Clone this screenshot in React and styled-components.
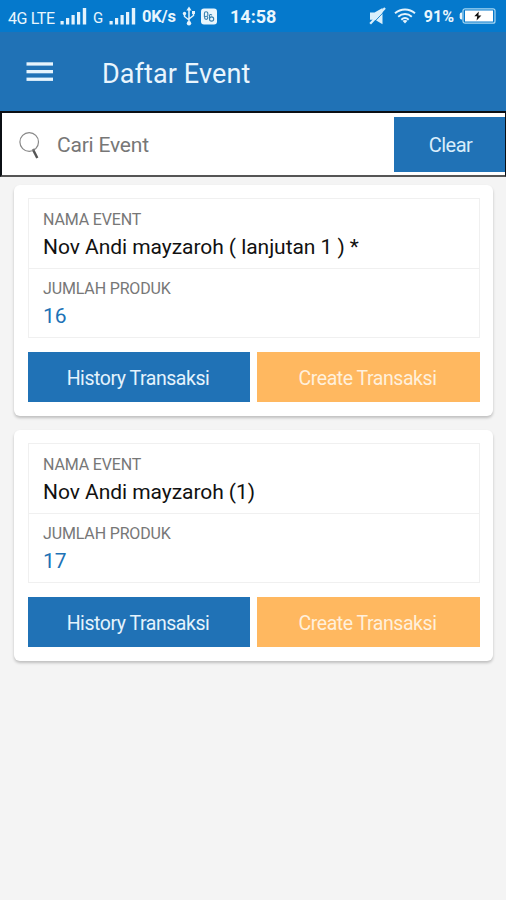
import React, { useState } from 'react';
import styled, { createGlobalStyle } from 'styled-components';

const EVENTS = [
  { id: 1, name: 'Nov Andi mayzaroh ( lanjutan 1 ) *', total: 16 },
  { id: 2, name: 'Nov Andi mayzaroh (1)', total: 17 },
];

const SignalIcon = () => (
  <svg width="28" height="18" viewBox="0 0 28 18" fill="#e4f3fc">
    <rect x="0.5" y="14" width="3.2" height="3.5" />
    <rect x="6" y="11" width="3.2" height="6.5" />
    <rect x="11.5" y="8" width="3.2" height="9.5" />
    <rect x="17" y="5" width="3.2" height="12.5" />
    <rect x="22.8" y="1" width="3.4" height="16.5" />
  </svg>
);

const UsbIcon = () => (
  <svg width="14" height="20" viewBox="0 0 14 20" fill="none" stroke="#e4f3fc" strokeWidth="1.5">
    <path d="M7 3v14M2.5 8v2.5L7 14M11.5 7v2.5L7 13" />
    <path d="M7 0.5l2.6 4H4.4z" fill="#e4f3fc" stroke="none" />
    <circle cx="7" cy="17.3" r="2.2" fill="#e4f3fc" stroke="none" />
    <circle cx="2.5" cy="7.5" r="1.7" fill="#e4f3fc" stroke="none" />
    <rect x="10" y="5" width="3" height="3" fill="#e4f3fc" stroke="none" />
  </svg>
);

const AppBadgeIcon = () => (
  <svg width="16" height="17" viewBox="0 0 16 17">
    <rect width="16" height="16" y="0.5" rx="3" fill="#e9f6fd" />
    <g fill="none" stroke="#347fae" strokeWidth="1.1">
      <path d="M3.4 9V5.6c0-2.4 3.4-2.4 3.4 0V8" />
      <circle cx="5.2" cy="9.8" r="1.6" />
      <circle cx="10.6" cy="11" r="2.1" />
      <path d="M8.5 10.5V7.8c0-1.5 1.6-1.7 2.4-0.6" />
    </g>
  </svg>
);

const MutedIcon = () => (
  <svg width="17" height="18" viewBox="0 0 17 18">
    <path d="M1 5.5h4.5L13.5 1v16.3L6 12.8H1z" fill="#d9effb" />
    <path d="M2.6 17.8L17 2.6" stroke="#0579cc" strokeWidth="0.9" />
    <path d="M1.2 16.8L16 1" stroke="#d9effb" strokeWidth="2.2" />
  </svg>
);

const WifiIcon = () => (
  <svg width="22" height="16" viewBox="0 0 22 16" fill="none" stroke="#e4f3fc" strokeWidth="1.9">
    <path d="M1 5.3c5.8-5.1 14.2-5.1 20 0M4.2 8.7c4-3.6 9.6-3.6 13.6 0M7.3 11.8c2.2-2 5.2-2 7.4 0" />
    <path d="M8.5 12.8L11 15.5l2.5-2.7c-1.4-1.2-3.6-1.2-5 0z" fill="#e4f3fc" stroke="none" />
  </svg>
);

const BatteryIcon = () => (
  <svg width="37" height="16" viewBox="0 0 37 16">
    <path d="M3.2 4.5H2.5Q0.7 4.5 0.7 6.5v3q0 2 1.8 2h0.7z" fill="#e4f3fc" />
    <rect x="4" y="0.8" width="32" height="14.4" rx="2" fill="none" stroke="#a8d8f2" strokeWidth="1.2" />
    <rect x="6" y="2.5" width="28" height="11" fill="#fff" />
    <path d="M19.8 3.5l-4.5 4.7h2.9l-0.6 4.3 4.8-5h-3z" fill="#111" />
  </svg>
);

const MenuIcon = () => (
  <svg width="28" height="20" viewBox="0 0 28 20" fill="#e6f4fd">
    <rect x="0.5" y="0.3" width="26.5" height="3.3" />
    <rect x="0.5" y="8" width="26.5" height="3.3" />
    <rect x="0.5" y="15.6" width="26.5" height="3.3" />
  </svg>
);

const SearchIcon = () => (
  <svg width="22" height="28" viewBox="0 0 22 28" fill="none">
    <circle cx="10.2" cy="10" r="9.3" stroke="#888" strokeWidth="1.2" />
    <path d="M13 18.2l2.6-1.3" stroke="#777" strokeWidth="1.2" />
    <path d="M14.4 18.4l3.9 7.6" stroke="#555" strokeWidth="2.4" />
  </svg>
);

const EventCard = ({ name, total }) => (
  <Card>
    <Detail>
      <Field>
        <Label>NAMA EVENT</Label>
        <Value>{name}</Value>
      </Field>
      <Field>
        <Label>JUMLAH PRODUK</Label>
        <Value $count>{total}</Value>
      </Field>
    </Detail>
    <Actions>
      <ActionButton>History Transaksi</ActionButton>
      <ActionButton $create>Create Transaksi</ActionButton>
    </Actions>
  </Card>
);

const App = () => {
  const [keyword, setKeyword] = useState('');

  const events = EVENTS.filter(({ name }) =>
    name.toLowerCase().includes(keyword.toLowerCase())
  );

  return (
    <Screen>
      <GlobalStyle />
      <StatusBar>
        <StatusGroup>
          <Network $width={47}>4G LTE</Network>
          <SignalIcon />
          <Network $width={11} $small>G</Network>
          <SignalIcon />
          <Speed>0K/s</Speed>
          <UsbIcon />
          <AppBadgeIcon />
          <Clock>14:58</Clock>
        </StatusGroup>
        <StatusGroup $right>
          <MutedIcon />
          <WifiIcon />
          <Percent>91%</Percent>
          <BatteryIcon />
        </StatusGroup>
      </StatusBar>
      <Header>
        <MenuButton>
          <MenuIcon />
        </MenuButton>
        <Title>Daftar Event</Title>
      </Header>
      <SearchBar>
        <SearchIcon />
        <SearchInput
          value={keyword}
          placeholder="Cari Event"
          onChange={event => setKeyword(event.target.value)}
        />
        <ClearButton onClick={() => setKeyword('')}>Clear</ClearButton>
      </SearchBar>
      <List>
        {events.map(({ id, name, total }) => (
          <EventCard key={id} name={name} total={total} />
        ))}
      </List>
    </Screen>
  );
};

const GlobalStyle = createGlobalStyle`
  * {
    box-sizing: border-box;
  }

  body {
    margin: 0;
    background-color: #f4f4f4;
    font-family: Roboto, 'Noto Sans', sans-serif;
  }

  button,
  input {
    margin: 0;
    padding: 0;
    border: none;
    font-family: inherit;
  }

  svg {
    display: block;
    flex-shrink: 0;
  }
`;

const Screen = styled.div`
  display: flex;
  flex-direction: column;
  width: 506px;
  height: 900px;
  overflow: hidden;
  background-color: #f4f4f4;
`;

const StatusBar = styled.div`
  display: flex;
  justify-content: space-between;
  height: 32px;
  padding: 0 10px 0 8px;
  color: #e9f6fd;
  background-color: #0579cc;
`;

const StatusGroup = styled.div`
  display: flex;
  align-items: center;
  gap: ${({ $right }) => ($right ? '8px' : '5px')};
  white-space: nowrap;
`;

const Network = styled.span`
  width: ${({ $width }) => $width}px;
  padding-top: 4px;
  font-size: ${({ $small }) => ($small ? 15 : 16)}px;
  letter-spacing: -0.4px;
`;

const Speed = styled.span`
  width: 35px;
  font-size: 16.5px;
  font-weight: 700;
  letter-spacing: -0.2px;
`;

const Clock = styled.span`
  margin-left: 8px;
  font-size: 18px;
  font-weight: 700;
`;

const Percent = styled.span`
  margin-right: -3px;
  font-size: 16px;
  font-weight: 700;
`;

const Header = styled.header`
  display: flex;
  align-items: center;
  height: 79px;
  padding: 0 26px;
  background-color: #2072b6;
`;

const MenuButton = styled.button`
  width: 76px;
  background: none;
`;

const Title = styled.h1`
  margin: 4px 0 0;
  color: #e9f5fd;
  font-size: 27px;
  font-weight: 400;
  letter-spacing: 0.1px;
`;

const SearchBar = styled.div`
  display: flex;
  align-items: center;
  height: 66px;
  padding: 0 0 0 17px;
  border: 2px solid #0b0f14;
  border-right-width: 1px;
  border-bottom-color: #555;
  background-color: #fff;

  & > svg {
    margin-top: 3px;
  }
`;

const SearchInput = styled.input`
  flex: 1;
  min-width: 0;
  margin-left: 16px;
  padding-top: 2px;
  background: none;
  color: #111;
  font-size: 21px;
  letter-spacing: -0.2px;

  &:focus {
    outline: none;
  }

  &::placeholder {
    color: #777;
    opacity: 1;
  }
`;

const ClearButton = styled.button`
  width: 111px;
  height: 55px;
  padding: 2px 0 0 2px;
  color: #d8edfb;
  background-color: #2072b6;
  font-size: 20px;
  letter-spacing: -0.5px;
`;

const List = styled.main`
  display: flex;
  flex-direction: column;
  gap: 14px;
  padding: 8px 13px 0 14px;
`;

const Card = styled.section`
  height: 231px;
  padding: 13px 13px 14px 14px;
  border-radius: 6px;
  background-color: #fff;
  box-shadow: 0 2px 3px rgba(0, 0, 0, 0.22);
`;

const Detail = styled.div`
  height: 140px;
  border: 1px solid #f0f0f0;
`;

const Field = styled.div`
  height: 69px;
  padding: 11px 14px 0;

  & + & {
    height: 70px;
    padding-top: 10px;
    border-top: 1px solid #f0f0f0;
  }
`;

const Label = styled.div`
  color: #777;
  font-size: 16px;
  line-height: 20px;
  letter-spacing: -0.15px;
`;

const Value = styled.div`
  margin-top: 3px;
  color: ${({ $count }) => ($count ? '#2072b6' : '#111')};
  font-size: 21px;
  line-height: 28px;
  letter-spacing: -0.05px;
  white-space: pre;
`;

const Actions = styled.div`
  display: flex;
  gap: 7px;
  margin-top: 14px;
`;

const ActionButton = styled.button`
  flex: ${({ $create }) => ($create ? '0 0 223px' : '1')};
  height: 50px;
  padding: 2px 2px 0 0;
  color: ${({ $create }) => ($create ? '#fff0dc' : '#e4f3fd')};
  background-color: ${({ $create }) => ($create ? '#ffb860' : '#2072b6')};
  font-size: 19.5px;
  letter-spacing: -0.45px;
`;

export default App;
